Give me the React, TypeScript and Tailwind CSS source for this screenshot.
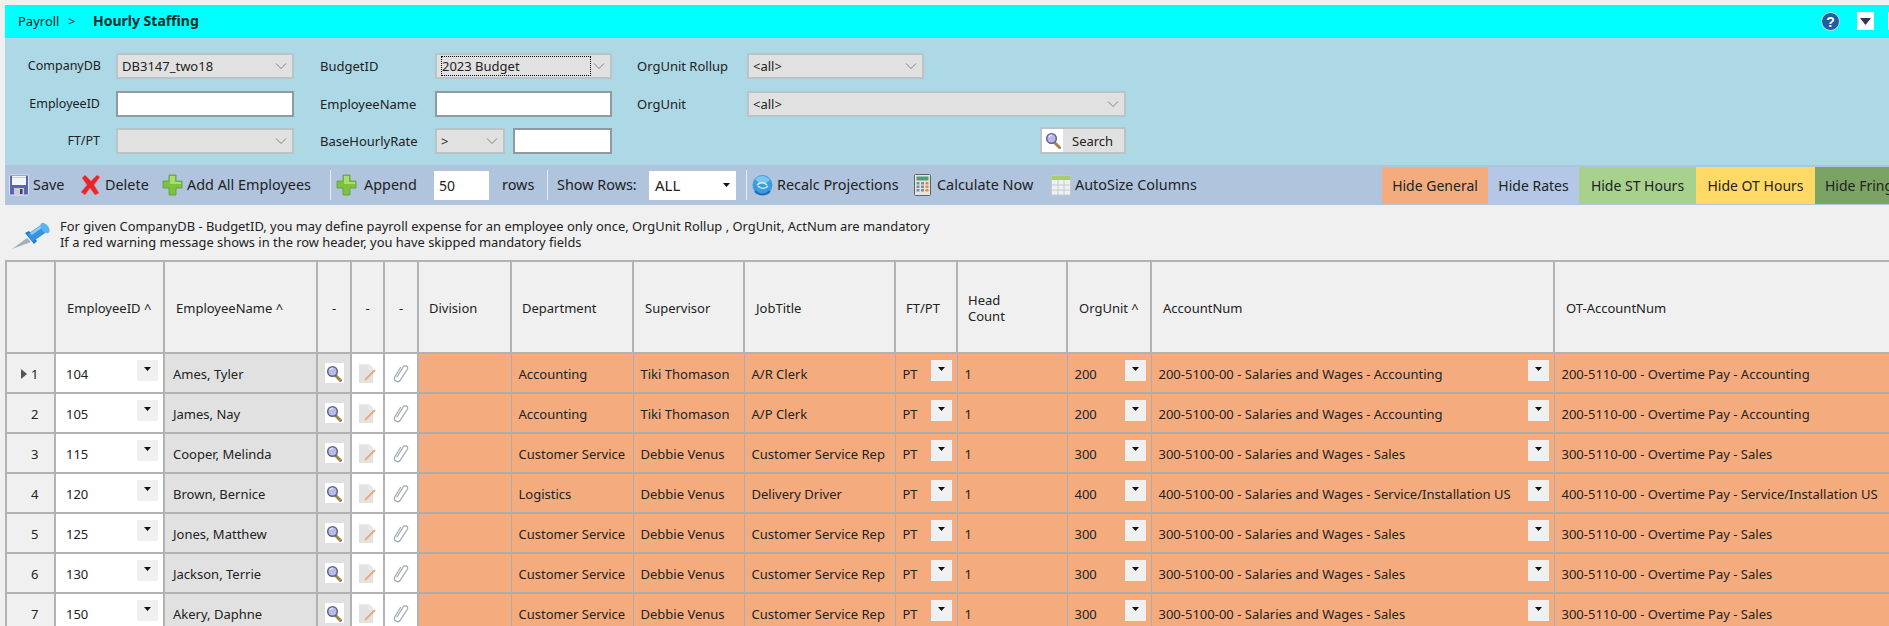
import React from "react";

const Chevron = () => (
  <svg width="12" height="8" viewBox="0 0 12 8" className="flex-none">
    <path d="M1 1.500 6 6.500 11 1.500" fill="none" stroke="#7d8387" strokeWidth="1" />
  </svg>
);

const FormSelect = ({ value, focus, className = "" }: { value?: string; focus?: boolean; className?: string }) => (
  <div className={`flex h-[26px] items-center justify-between border-2 border-[#b9c4c9] bg-[#e1e1e1] pl-1 pr-[5px] ${className}`}>
    <span className={focus ? "flex h-[20px] w-[150px] items-center border border-dotted border-black" : ""}>{value}</span>
    <Chevron />
  </div>
);

const FormInput = ({ className = "" }: { className?: string }) => (
  <input readOnly className={`h-[26px] border-2 border-[#8f9ba1] bg-white ${className}`} />
);

const Floppy = () => (
  <svg width="20" height="22" viewBox="0 0 20 22" className="flex-none">
    <rect x="0.500" y="1" width="19" height="20" rx="1" fill="#5a63b8" stroke="#dfe3f5" />
    <rect x="3" y="2" width="14" height="9" fill="#f4f5fb" />
    <rect x="3" y="3" width="14" height="1" fill="#c8cbe8" />
    <rect x="5" y="14" width="10" height="7" fill="#c9cbd8" />
    <rect x="11" y="15" width="2.500" height="5" fill="#3b3f7c" />
  </svg>
);
const RedX = () => (
  <svg width="21" height="22" viewBox="0 0 21 22" className="flex-none">
    <path d="M2 4 5 1 11 7 17 1 20 3 14 11 19 19 15 21 10 14 5 21 1 18 7 11Z" fill="#e8262a" stroke="#f3706b" strokeWidth="0.6" />
  </svg>
);
const Plus = () => (
  <svg width="21" height="22" viewBox="0 0 21 22" className="flex-none">
    <path d="M7 1h7v6h6v7h-6v7H7v-7H1V7h6Z" fill="#7cc23e" stroke="#5d9d32" strokeWidth="0.8" />
    <path d="M8 2h5v6h6v2H8Z" fill="#a9de6d" />
  </svg>
);
const Recalc = () => (
  <svg width="21" height="22" viewBox="0 0 21 22" className="flex-none">
    <circle cx="10.500" cy="11" r="10" fill="#3d9be0" />
    <path d="M3 5a10 10 0 0 1 15 1l-4 3H7Z" fill="#7cc5ef" />
    <path d="M5 11c3-3 7-3 10 0M16 12c-3 3-7 3-10 0" fill="none" stroke="#d8eefb" strokeWidth="1.6" />
    <path d="M3 17a10 10 0 0 0 15 0" fill="none" stroke="#1f6fb8" strokeWidth="2" />
  </svg>
);
const Calculator = () => (
  <svg width="17" height="22" viewBox="0 0 17 22" className="flex-none">
    <rect x="0.500" y="0.500" width="16" height="21" rx="1" fill="#e6e6e0" stroke="#5c6660" />
    <rect x="2.500" y="2.500" width="12" height="4" fill="#4f9d78" />
    {[8, 11.5, 15].map((y) =>
      [2.5, 7, 11.5].map((x) => (
        <rect key={`${x}-${y}`} x={x} y={y} width="3" height="2.500" fill={x > 10 ? "#e08a4c" : "#7e8f9c"} />
      ))
    )}
  </svg>
);
const GridIcon = () => (
  <svg width="20" height="22" viewBox="0 0 20 22" className="flex-none">
    <rect x="0.500" y="2" width="19" height="19" fill="#eef1f2" stroke="#c3ccd0" />
    <rect x="0.500" y="2" width="19" height="4" fill="#a6cf6b" />
    <path d="M7 6v15M13 6v15M1 11h18M1 16h18" stroke="#c3ccd0" />
  </svg>
);
const Pin = () => (
  <svg width="42" height="28" viewBox="0 0 42 28">
    <path d="M1 27 16 16 20 20Z" fill="#a3b0ba" />
    <path d="M14 11 23 22 26 19 18 9Z" fill="#1f78c9" />
    <path d="M19 16 32 7" stroke="#3a93e2" strokeWidth="9" strokeLinecap="butt" />
    <path d="M20 12 30 5" stroke="#8fd0f7" strokeWidth="2.500" />
    <ellipse cx="34" cy="6" rx="3.500" ry="6" transform="rotate(-38 34 6)" fill="#5bb4f0" />
  </svg>
);
const Help = () => (
  <svg width="19" height="19" viewBox="0 0 19 19">
    <circle cx="9.500" cy="9.500" r="9" fill="#1f5f9e" stroke="#c9dde8" strokeWidth="1" />
    <text x="9.500" y="14.500" textAnchor="middle" fontSize="14" fontWeight="700" fill="#fff" fontFamily="Liberation Sans, sans-serif">?</text>
  </svg>
);
const Search = () => (
  <svg width="16" height="17" viewBox="0 0 16 17">
    <path d="M9 10 14.500 15.500" stroke="#a5824c" strokeWidth="3" strokeLinecap="round" />
    <circle cx="6.500" cy="6.500" r="4.800" fill="#bcb8ea" stroke="#5a6490" strokeWidth="1.5" />
    <path d="M4 5a3 3 0 0 1 3-2" stroke="#fff" fill="none" />
  </svg>
);
const NoteIcon = () => (
  <svg width="19" height="20" viewBox="0 0 19 20">
    <path d="M1 1h10l4 4v15H1Z" fill="#e2e2e2" />
    <path d="M1 1h10v5h4" fill="none" stroke="#f3f3f3" />
    <path d="M7 17 17 7" stroke="#eda878" strokeWidth="2" />
  </svg>
);
const Clip = () => (
  <svg width="18" height="20" viewBox="0 0 18 20">
    <path
      d="M5 14 11.500 3.500a2.400 2.400 0 0 1 4 2.500L8 17.500a3.200 3.200 0 0 1-5.400-3.300L8.500 4.500"
      fill="none"
      stroke="#a3adb5"
      strokeWidth="1.3"
      strokeLinecap="round"
    />
  </svg>
);
const Arrow = () => (
  <svg width="7" height="4" viewBox="0 0 7 4">
    <path d="M0 0h7L3.500 4Z" fill="#111" />
  </svg>
);
const Drop = () => (
  <div className="absolute right-[5px] top-[6px] flex h-[21px] w-[21px] items-start justify-center bg-[#f0f0f0] pt-[7px]">
    <Arrow />
  </div>
);

const TB = ({ w, icon, children, className = "" }: { w: string; icon?: React.ReactNode; children: React.ReactNode; className?: string }) => (
  <div className={`flex flex-none items-center gap-[4px] whitespace-nowrap ${w} ${className}`}>
    {icon}
    <span>{children}</span>
  </div>
);

const Sep = () => <div className="h-[30px] w-px flex-none bg-[#e6edf5]" />;

const rows = [
  ["104", "Ames, Tyler", "Accounting", "Tiki Thomason", "A/R Clerk", "200", "200-5100-00 - Salaries and Wages - Accounting", "200-5110-00 - Overtime Pay - Accounting"],
  ["105", "James, Nay", "Accounting", "Tiki Thomason", "A/P Clerk", "200", "200-5100-00 - Salaries and Wages - Accounting", "200-5110-00 - Overtime Pay - Accounting"],
  ["115", "Cooper, Melinda", "Customer Service", "Debbie Venus", "Customer Service Rep", "300", "300-5100-00 - Salaries and Wages - Sales", "300-5110-00 - Overtime Pay - Sales"],
  ["120", "Brown, Bernice", "Logistics", "Debbie Venus", "Delivery Driver", "400", "400-5100-00 - Salaries and Wages - Service/Installation US", "400-5110-00 - Overtime Pay - Service/Installation US"],
  ["125", "Jones, Matthew", "Customer Service", "Debbie Venus", "Customer Service Rep", "300", "300-5100-00 - Salaries and Wages - Sales", "300-5110-00 - Overtime Pay - Sales"],
  ["130", "Jackson, Terrie", "Customer Service", "Debbie Venus", "Customer Service Rep", "300", "300-5100-00 - Salaries and Wages - Sales", "300-5110-00 - Overtime Pay - Sales"],
  ["150", "Akery, Daphne", "Customer Service", "Debbie Venus", "Customer Service Rep", "300", "300-5100-00 - Salaries and Wages - Sales", "300-5110-00 - Overtime Pay - Sales"],
];

const TH = ({ children, className = "" }: { children?: React.ReactNode; className?: string }) => (
  <th className={`border-r-2 border-b-2 border-[#b0b2b4] pt-[1px] align-middle font-normal ${className}`}>{children}</th>
);
const orange = "relative border-r border-b-2 border-[#a8aeb2] bg-[#f4ac7f] pl-[7px] pr-0 pt-[2px] whitespace-nowrap overflow-hidden";
const grey = "border-r-2 border-b-2 border-[#b0b2b4]";
const formCols = "grid grid-cols-[111px_178px_141px_177px_135px_379px] items-center";

export default function App() {
  return (
    <div className="h-[626px] w-[1889px] overflow-hidden bg-[#f0f0f0] pt-[5px] pl-[5px] font-['Noto_Sans',sans-serif] text-[13px] leading-[16px] text-[#222]">
      <div className="flex h-[33px] items-center bg-[#00ffff] pl-[13px] pb-[1px]">
        <span className="w-[50px]">Payroll</span>
        <span className="w-[25px]">&gt;</span>
        <span className="text-[14px] font-bold text-[#0b2b2b]">Hourly Staffing</span>
        <div className="ml-auto flex items-center">
          <Help />
          <div className="ml-[17px] flex h-[18px] w-[17px] items-center justify-center bg-white">
            <svg width="11" height="7" viewBox="0 0 11 7"><path d="M0 0h11L5.500 7Z" fill="#33335a" /></svg>
          </div>
          <div className="ml-[14px] h-[18px] w-[1px] bg-white" />
        </div>
      </div>

      <div className="h-[127px] bg-[#add8e6] pt-[15px]">
        <div className={formCols}>
          <div className="pr-[15px] text-right text-[12.5px]">CompanyDB</div>
          <FormSelect value="DB3147_two18" />
          <div className="pl-[26px]">BudgetID</div>
          <FormSelect value="2023 Budget" focus />
          <div className="pl-[25px]">OrgUnit Rollup</div>
          <FormSelect value="<all>" className="w-[177px]" />
        </div>
        <div className={`${formCols} mt-[12px]`}>
          <div className="pr-[16px] text-right text-[12.5px]">EmployeeID</div>
          <FormInput className="w-[178px]" />
          <div className="pl-[26px]">EmployeeName</div>
          <FormInput className="w-[177px]" />
          <div className="pl-[25px]">OrgUnit</div>
          <FormSelect value="<all>" />
        </div>
        <div className={`${formCols} mt-[10px]`}>
          <div className="pr-[16px] text-right text-[12.5px]">FT/PT</div>
          <FormSelect />
          <div className="pl-[26px]">BaseHourlyRate</div>
          <div className="flex justify-between">
            <FormSelect value=">" className="w-[70px]" />
            <FormInput className="w-[99px]" />
          </div>
          <div />
          <div className="flex justify-end">
            <div className="flex h-[27px] w-[86px] items-center border-2 border-[#b9c4c9] bg-[#e1e1e1]">
              <div className="flex h-full w-[21px] items-center justify-center bg-white"><Search /></div>
              <span className="pl-[9px]">Search</span>
            </div>
          </div>
        </div>
      </div>

      <div className="flex h-[40px] items-center overflow-hidden bg-[#b0c4de] pl-[4px] text-[14.4px]">
        <TB w="w-[71px]" icon={<Floppy />}>Save</TB>
        <TB w="w-[82px]" icon={<RedX />}>Delete</TB>
        <TB w="w-[168px]" icon={<Plus />}>Add All Employees</TB>
        <Sep />
        <TB w="w-[103px]" className="gap-[7px] pl-[5px]" icon={<Plus />}>Append</TB>
        <input readOnly value="50" className="h-[29px] w-[55px] flex-none bg-white pl-[5px] text-[14px]" />
        <TB w="w-[45px]" className="pl-[13px]">rows</TB>
        <div className="w-[13px] flex-none" />
        <Sep />
        <TB w="w-[101px]" className="pl-[9px]">Show Rows:</TB>
        <div className="flex h-[29px] w-[87px] flex-none items-center justify-between bg-white pl-[6px] pr-[6px]">
          <span className="text-[15px]">ALL</span>
          <Arrow />
        </div>
        <div className="w-[10px] flex-none" />
        <Sep />
        <TB w="w-[167px]" className="pl-[5px]" icon={<Recalc />}>Recalc Projections</TB>
        <TB w="w-[137px]" icon={<Calculator />} className="gap-[6px]">Calculate Now</TB>
        <TB w="w-[331px]" icon={<GridIcon />}>AutoSize Columns</TB>
        <div className="mb-[1px] flex h-[37px] flex-none self-end text-[14px]">
          <div className="flex w-[106px] flex-none items-center justify-center bg-[#f4ac7f]">Hide General</div>
          <div className="flex w-[91px] flex-none items-center justify-center bg-[#b4c7e7]">Hide Rates</div>
          <div className="flex w-[117px] flex-none items-center justify-center bg-[#a9d18e]">Hide ST Hours</div>
          <div className="flex w-[119px] flex-none items-center justify-center bg-[#ffd966]">Hide OT Hours</div>
          <div className="flex w-[120px] flex-none items-center whitespace-nowrap bg-[#7ba363] pl-[10px]">Hide Fringe</div>
        </div>
      </div>

      <div className="flex h-[55px] items-start pl-[6px] pt-[13px]">
        <div className="w-[49px] flex-none pt-[4px]"><Pin /></div>
        <div className="whitespace-nowrap text-[12.9px] leading-[16px]">
          <div>For given CompanyDB - BudgetID, you may define payroll expense for an employee only once, OrgUnit Rollup , OrgUnit, ActNum are mandatory</div>
          <div>If a red warning message shows in the row header, you have skipped mandatory fields</div>
        </div>
      </div>

      <table className="w-[1884px] table-fixed border-collapse border-t-2 border-l-2 border-[#b0b2b4]">
        <colgroup>
          <col className="w-[49px]" />
          <col className="w-[109px]" />
          <col className="w-[153px]" />
          <col className="w-[34px]" />
          <col className="w-[33px]" />
          <col className="w-[34px]" />
          <col className="w-[93px]" />
          <col className="w-[122px]" />
          <col className="w-[111px]" />
          <col className="w-[151px]" />
          <col className="w-[62px]" />
          <col className="w-[110px]" />
          <col className="w-[84px]" />
          <col className="w-[403px]" />
          <col className="w-[336px]" />
        </colgroup>
        <thead>
          <tr className="h-[92px]">
            <TH />
            <TH className="pl-[11px] text-left">EmployeeID ^</TH>
            <TH className="pl-[11px] text-left">EmployeeName ^</TH>
            <TH className="text-center">-</TH>
            <TH className="text-center">-</TH>
            <TH className="text-center">-</TH>
            <TH className="pl-[10px] text-left">Division</TH>
            <TH className="pl-[10px] text-left">Department</TH>
            <TH className="pl-[11px] text-left">Supervisor</TH>
            <TH className="pl-[11px] text-left">JobTitle</TH>
            <TH className="pl-[10px] text-left">FT/PT</TH>
            <TH className="pl-[10px] text-left">Head<br />Count</TH>
            <TH className="pl-[11px] text-left">OrgUnit ^</TH>
            <TH className="pl-[11px] text-left">AccountNum</TH>
            <TH className="pl-[11px] text-left">OT-AccountNum</TH>
          </tr>
        </thead>
        <tbody>
          {rows.map((r, i) => (
            <tr key={r[0]} className="h-[40px]">
              <td className={`${grey} bg-[#f0f0f0] pt-[2px]`}>
                <div className="flex items-center">
                  <div className="flex w-[22px] justify-end pr-[2px]">
                    {i === 0 && (
                      <svg width="6" height="10" viewBox="0 0 6 10"><path d="M0 0v10l6-5Z" fill="#555" /></svg>
                    )}
                  </div>
                  <span className="pl-[2px]">{i + 1}</span>
                </div>
              </td>
              <td className={`relative ${grey} bg-white pl-[10px] pt-[2px]`}>
                {r[0]}
                <Drop />
              </td>
              <td className={`${grey} bg-[#e1e1e1] pl-[8px] pt-[2px]`}>{r[1]}</td>
              <td className={`${grey} bg-[#e1e1e1] align-top`}>
                <div className="mx-auto mt-[9px] flex h-[20px] w-[19px] items-center justify-center bg-white"><Search /></div>
              </td>
              <td className={`${grey} bg-white align-top`}>
                <div className="mx-auto mt-[9px] flex h-[20px] w-[19px]"><NoteIcon /></div>
              </td>
              <td className={`${grey} bg-white align-top`}>
                <div className="mx-auto mt-[9px] flex h-[20px] w-[18px]"><Clip /></div>
              </td>
              <td className={orange}></td>
              <td className={orange}>{r[2]}</td>
              <td className={orange}>{r[3]}</td>
              <td className={orange}>{r[4]}</td>
              <td className={orange}>PT<Drop /></td>
              <td className={orange}>1</td>
              <td className={orange}>{r[5]}<Drop /></td>
              <td className={orange}>{r[6]}<Drop /></td>
              <td className={orange}>{r[7]}</td>
            </tr>
          ))}
        </tbody>
      </table>
    </div>
  );
}
